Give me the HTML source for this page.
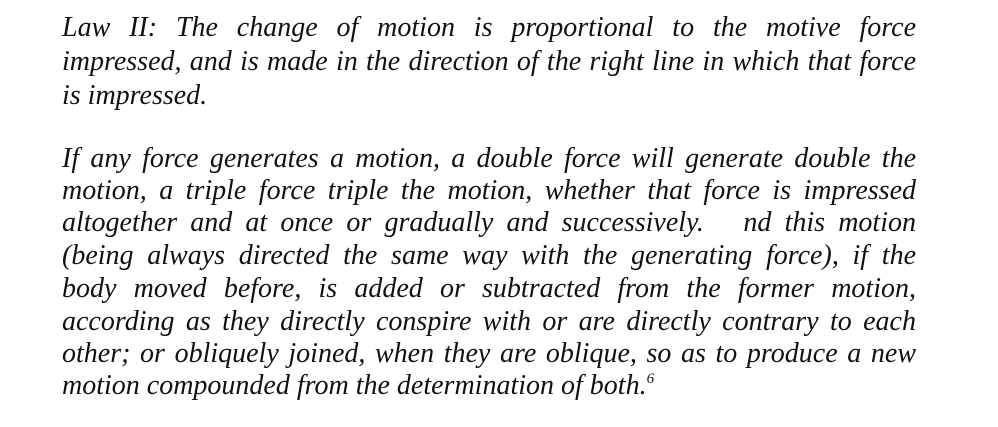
<!DOCTYPE html>
<html><head><meta charset="utf-8"><style>
body{margin:0;width:998px;height:427px;background:#fff;overflow:hidden;position:relative;font-family:"Liberation Serif",serif;font-style:italic;font-size:28px;color:#111}
.l{position:absolute;left:62px;width:854px;height:33px;line-height:33px;white-space:nowrap;text-align:justify;text-align-last:justify}
.n{text-align-last:left}
sup{font-size:15px;vertical-align:11px;line-height:0}
</style></head><body>
<div class="l" style="top:11px">Law II: The change of motion is proportional to the motive force</div>
<div class="l" style="top:45px">impressed, and is made in the direction of the right line in which that force</div>
<div class="l n" style="top:79px">is impressed.</div>
<div class="l" style="top:142px">If any force generates a motion, a double force will generate double the</div>
<div class="l" style="top:174px">motion, a triple force triple the motion, whether that force is impressed</div>
<div class="l" style="top:206px">altogether and at once or gradually and successively. &nbsp; nd this motion</div>
<div class="l" style="top:239px">(being always directed the same way with the generating force), if the</div>
<div class="l" style="top:272px">body moved before, is added or subtracted from the former motion,</div>
<div class="l" style="top:305px">according as they directly conspire with or are directly contrary to each</div>
<div class="l" style="top:337px">other; or obliquely joined, when they are oblique, so as to produce a new</div>
<div class="l n" style="top:369px">motion compounded from the determination of both.<sup>6</sup></div>
</body></html>
